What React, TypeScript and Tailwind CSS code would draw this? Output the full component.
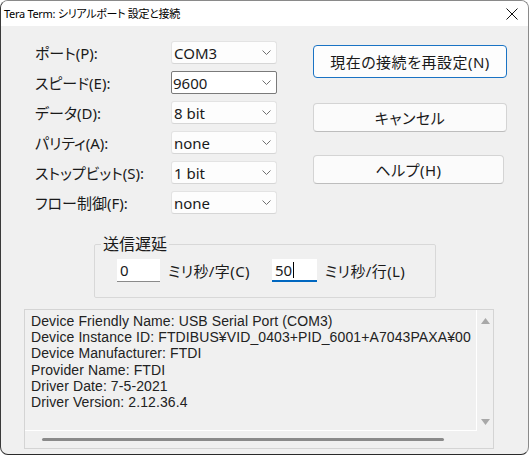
import React from "react";

const UI = "font-['Noto_Sans','Noto_Sans_CJK_JP',sans-serif] [font-feature-settings:'palt']";

const rows: [string, string, boolean][] = [
  ["ポート(P):", "COM3", false],
  ["スピード(E):", "9600", true],
  ["データ(D):", "8 bit", false],
  ["パリティ(A):", "none", false],
  ["ストップビット(S):", "1 bit", false],
  ["フロー制御(F):", "none", false],
];

function Chevron() {
  return (
    <svg width="9" height="5" viewBox="0 0 9 5" className="shrink-0">
      <path d="M0.5 0.5 L4.5 4.5 L8.5 0.5" stroke="#707070" fill="none" strokeWidth="1" />
    </svg>
  );
}

function Combo({ value, active }: { value: string; active: boolean }) {
  return (
    <div
      className={
        active
          ? "h-[23px] w-[106px] flex items-center justify-between bg-white border border-[#7a7a7a] rounded-[2px] pl-[1px] pr-[5px]"
          : "h-[23px] w-[106px] flex items-center justify-between bg-[#fdfdfd] border border-[#e3e3e3] border-b-[#d6d6d6] rounded-[3px] pl-[2px] pr-[5px]"
      }
    >
      <span className="text-[15px] leading-[18px] text-[#1a1a1a]">{value}</span>
      <Chevron />
    </div>
  );
}

function Btn({ children, primary, w }: { children: React.ReactNode; primary?: boolean; w: string }) {
  return (
    <div
      className={
        (primary
          ? "h-[33px] border border-[#1a73c4] bg-[#fdfdfd] "
          : "h-[29px] border border-[#d4d4d4] border-b-[#bdbdbd] bg-[#fbfbfb] ") +
        w +
        " rounded-[4px] flex items-center justify-center text-[15px] leading-[18px] tracking-[0.5px] text-[#1a1a1a]"
      }
    >
      {children}
    </div>
  );
}

export default function App() {
  return (
    <div className={`w-[529px] h-[455px] flex flex-col bg-[#f0f0f0] border border-[#8a8a8a] border-l-[#3a3a3a] border-b-[#2a2a2a] rounded-[8px] overflow-hidden ${UI}`}>
      <div className="h-[25px] shrink-0 bg-white flex items-center justify-between pl-[3px] pr-[10px]">
        <span className="text-[11px] leading-[14px] tracking-[-0.3px] text-black">Tera Term: シリアルポート 設定と接続</span>
        <svg width="12" height="12" viewBox="0 0 12 12">
          <path d="M0.5 0.5 L11.5 11.5 M11.5 0.5 L0.5 11.5" stroke="#111" strokeWidth="1" fill="none" />
        </svg>
      </div>
      <div className="flex-1 flex flex-col pl-[23px] pt-[15px]">
        <div className="flex pl-[11px]">
          <div className="grid grid-cols-[136px_106px] auto-rows-[23px] gap-y-[7px]">
            {rows.map(([label, value, active]) => (
              <React.Fragment key={label}>
                <div className="flex items-center text-[15px] leading-[18px] text-[#1a1a1a]">{label}</div>
                <Combo value={value} active={active} />
              </React.Fragment>
            ))}
          </div>
          <div className="ml-[36px] pt-[4px] flex flex-col">
            <Btn primary w="w-[194px]">現在の接続を再設定(N)</Btn>
            <div className="mt-[25px]">
              <Btn w="w-[194px]">キャンセル</Btn>
            </div>
            <div className="mt-[23px]">
              <Btn w="w-[191px]">ヘルプ(H)</Btn>
            </div>
          </div>
        </div>

        <fieldset className="ml-[70px] mt-[22px] w-[342px] h-[62px] border border-[#d8d8d8] rounded-[2px]">
          <legend className="ml-[6px] px-[2px] text-[16px] leading-[16px] text-[#1a1a1a]">送信遅延</legend>
          <div className="flex items-center mt-[7px] ml-[22px]">
            <div className="w-[43px] h-[23px] bg-white border-b border-[#8a8a8a] flex items-center pl-[3px] text-[15px] leading-[18px] text-[#1a1a1a]">0</div>
            <span className="ml-[8px] text-[15px] leading-[18px] tracking-[0.4px] text-[#1a1a1a]">ミリ秒/字(C)</span>
            <div className="ml-[22px] w-[45px] h-[23px] bg-white border-b-2 border-[#0067c0] flex items-center pl-[3px] text-[15px] leading-[18px] text-[#1a1a1a]">
              50<span className="inline-block w-[1px] h-[16px] bg-black ml-[1px]" />
            </div>
            <span className="ml-[8px] text-[15px] leading-[18px] tracking-[0.4px] text-[#1a1a1a]">ミリ秒/行(L)</span>
          </div>
        </fieldset>

        <div className="mt-[11px] w-[470px] h-[140px] border border-[#d4d4d4] flex flex-col">
          <div className="flex h-[121px]">
            <div className="w-[452px] border-r border-b border-white pl-[6px] pt-[3px] font-['Liberation_Sans',Arial,sans-serif] [font-feature-settings:normal] text-[14px] leading-[16.2px] tracking-[0.1px] text-[#222] whitespace-nowrap overflow-hidden">
              <div>Device Friendly Name: USB Serial Port (COM3)</div>
              <div>Device Instance ID: FTDIBUS¥VID_0403+PID_6001+A7043PAXA¥00</div>
              <div>Device Manufacturer: FTDI</div>
              <div>Provider Name: FTDI</div>
              <div>Driver Date: 7-5-2021</div>
              <div>Driver Version: 2.12.36.4</div>
            </div>
            <div className="flex-1 flex flex-col items-center justify-between pt-[8px] pb-[6px]">
              <svg width="9" height="6" viewBox="0 0 9 6"><path d="M4.5 0 L9 6 L0 6 Z" fill="#a8a8a8" /></svg>
              <svg width="9" height="6" viewBox="0 0 9 6"><path d="M0 0 L9 0 L4.5 6 Z" fill="#a8a8a8" /></svg>
            </div>
          </div>
          <div className="flex-1 flex items-center pl-[17px]">
            <div className="w-[402px] h-[3px] bg-[#8a8a8a] rounded-full" />
          </div>
        </div>
      </div>
    </div>
  );
}
